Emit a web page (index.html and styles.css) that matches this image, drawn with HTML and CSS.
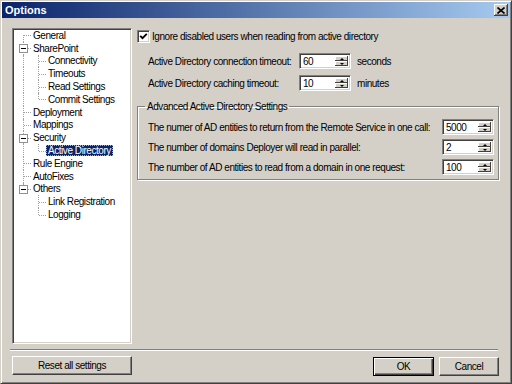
FILE: index.html
```html
<!DOCTYPE html>
<html lang="en">
<head>
    <meta charset="UTF-8">
    <title>Options</title>
    <link rel="stylesheet" href="styles.css">
</head>
<body>
    <div class="window">
        <div class="titlebar">
            <span class="title">Options</span>
            <span class="close">
                <svg width="8" height="7" viewBox="0 0 8 7"><path d="M0.5 0.5 L7.5 6.5 M7.5 0.5 L0.5 6.5" stroke="#000" stroke-width="1.6"/></svg>
            </span>
        </div>
        <div class="main">
            <div class="tree">
                <div class="row"><span class="g f"></span><span class="lbl">General</span></div>
                <div class="row"><span class="g t"><span class="box"></span></span><span class="lbl">SharePoint</span></div>
                <div class="row"><span class="g v"></span><span class="g t"></span><span class="lbl">Connectivity</span></div>
                <div class="row"><span class="g v"></span><span class="g t"></span><span class="lbl">Timeouts</span></div>
                <div class="row"><span class="g v"></span><span class="g t"></span><span class="lbl">Read Settings</span></div>
                <div class="row"><span class="g v"></span><span class="g l"></span><span class="lbl">Commit Settings</span></div>
                <div class="row"><span class="g t"></span><span class="lbl">Deployment</span></div>
                <div class="row"><span class="g t"></span><span class="lbl">Mappings</span></div>
                <div class="row"><span class="g t"><span class="box"></span></span><span class="lbl">Security</span></div>
                <div class="row"><span class="g v"></span><span class="g l"></span><span class="lbl selected">Active Directory</span></div>
                <div class="row"><span class="g t"></span><span class="lbl">Rule Engine</span></div>
                <div class="row"><span class="g t"></span><span class="lbl">AutoFixes</span></div>
                <div class="row"><span class="g l"><span class="box"></span></span><span class="lbl">Others</span></div>
                <div class="row"><span class="g"></span><span class="g t"></span><span class="lbl">Link Registration</span></div>
                <div class="row"><span class="g"></span><span class="g l"></span><span class="lbl">Logging</span></div>
            </div>
            <div class="panel">
                <div class="check-row">
                    <span class="check">
                        <svg width="9" height="9" viewBox="0 0 9 9"><path d="M1.2 3.8 L3.5 6.2 L7.8 1.8" fill="none" stroke="#000" stroke-width="1.8"/></svg>
                    </span>
                    <span>Ignore disabled users when reading from active directory</span>
                </div>
                <div class="fields">
                    <div class="field">
                        <span class="label">Active Directory connection timeout:</span>
                        <div class="spinbox"><span class="val">60</span><span class="spin"><span class="up"></span><span class="dn"></span></span></div>
                        <span class="unit">seconds</span>
                    </div>
                    <div class="field">
                        <span class="label">Active Directory caching timeout:</span>
                        <div class="spinbox"><span class="val">10</span><span class="spin"><span class="up"></span><span class="dn"></span></span></div>
                        <span class="unit">minutes</span>
                    </div>
                </div>
                <fieldset class="group">
                    <legend>Advanced Active Directory Settings</legend>
                    <div class="field wide">
                        <span class="label">The numer of AD entities to return from the Remote Service in one call:</span>
                        <div class="spinbox"><span class="val">5000</span><span class="spin"><span class="up"></span><span class="dn"></span></span></div>
                    </div>
                    <div class="field wide">
                        <span class="label">The number of domains Deployer will read in parallel:</span>
                        <div class="spinbox"><span class="val">2</span><span class="spin"><span class="up"></span><span class="dn"></span></span></div>
                    </div>
                    <div class="field wide">
                        <span class="label">The number of AD entities to read from a domain in one request:</span>
                        <div class="spinbox"><span class="val">100</span><span class="spin"><span class="up"></span><span class="dn"></span></span></div>
                    </div>
                </fieldset>
            </div>
        </div>
        <div class="sep"></div>
        <div class="footer">
            <button class="btn reset">Reset all settings</button>
            <span class="spacer"></span>
            <button class="btn ok">OK</button>
            <button class="btn cancel">Cancel</button>
        </div>
    </div>
</body>
</html>
```

FILE: styles.css
```css
body {
    margin: 0;
    font-family: "Liberation Sans", Arial, sans-serif;
    font-size: 10px;
    letter-spacing: -0.45px;
    color: #000;
}

.window {
    width: 512px;
    height: 384px;
    box-sizing: border-box;
    background: #d4d0c8;
    border: 1px solid;
    border-color: #d4d0c8 #404040 #404040 #d4d0c8;
    padding: 1px;
    box-shadow: inset 1px 1px #fff, inset -1px -1px #808080;
    display: flex;
    flex-direction: column;
}

.titlebar {
    height: 16px;
    flex: none;
    background: linear-gradient(to right, #0a246a, #a6caf0);
    display: flex;
    align-items: center;
    justify-content: space-between;
    padding: 0 2px 0 3px;
}

.title {
    color: #fff;
    font-weight: bold;
    font-size: 11px;
    letter-spacing: 0;
}

.close {
    width: 14px;
    height: 12px;
    background: #d4d0c8;
    box-shadow: inset -1px -1px #404040, inset 1px 1px #fff, inset -2px -2px #808080;
    display: flex;
    align-items: center;
    justify-content: center;
}

.main {
    display: flex;
    gap: 5px;
    height: 316px;
    margin: 10px 11px 0 10px;
}

/* tree */
.tree {
    width: 120px;
    flex: none;
    box-sizing: border-box;
    background: #fff;
    border: 1px solid;
    border-color: #808080 #fff #fff #808080;
    box-shadow: inset 1px 1px #404040, inset -1px -1px #d4d0c8;
    padding: 0 0 0 3px;
}

.row {
    height: 12.8px;
    display: flex;
    align-items: center;
}

.g {
    width: 15px;
    height: 100%;
    flex: none;
    position: relative;
}

.g::before, .g::after {
    content: "";
    position: absolute;
}

.g.v::before, .g.t::before {
    left: 7px;
    top: 0;
    bottom: 0;
    border-left: 1px dotted #a0a0a0;
}

.g.f::before {
    left: 7px;
    top: 50%;
    bottom: 0;
    border-left: 1px dotted #a0a0a0;
}

.g.l::before {
    left: 7px;
    top: 0;
    height: 50%;
    border-left: 1px dotted #a0a0a0;
}

.g.t::after, .g.f::after, .g.l::after {
    left: 8px;
    right: 0;
    top: 50%;
    border-top: 1px dotted #a0a0a0;
}

.box {
    position: absolute;
    left: 3px;
    top: 50%;
    margin-top: -4px;
    width: 9px;
    height: 9px;
    box-sizing: border-box;
    border: 1px solid #909090;
    background: #fff;
    z-index: 1;
    display: flex;
    align-items: center;
    justify-content: center;
}

.box::after {
    content: "";
    width: 5px;
    height: 1px;
    background: #000;
}

.lbl {
    padding: 0 2px;
    line-height: 11px;
    white-space: nowrap;
}

.lbl.selected {
    background: #0a246a;
    color: #fff;
    outline: 1px dotted #c8b070;
    outline-offset: -1px;
}

/* right side */
.panel {
    flex: 1;
    display: flex;
    flex-direction: column;
}

.check-row {
    display: flex;
    align-items: center;
    gap: 2px;
    height: 13px;
    margin-top: 2px;
}

.check {
    width: 13px;
    height: 13px;
    box-sizing: border-box;
    background: #fff;
    border: 1px solid;
    border-color: #808080 #fff #fff #808080;
    box-shadow: inset 1px 1px #404040, inset -1px -1px #d4d0c8;
    display: flex;
    align-items: center;
    justify-content: center;
}

.fields {
    display: flex;
    flex-direction: column;
    gap: 6px;
    margin-top: 10px;
}

.field {
    display: flex;
    align-items: center;
    height: 16px;
    padding-left: 11px;
}

.field .label {
    width: 151px;
    flex: none;
    white-space: nowrap;
}

.field.wide {
    padding-left: 10px;
}

.field.wide .label {
    width: auto;
    flex: 1;
}

.field.wide + .field.wide {
    margin-top: 4px;
}

.unit {
    margin-left: 6px;
}

.spinbox {
    width: 52px;
    height: 16px;
    flex: none;
    box-sizing: border-box;
    display: flex;
    background: #fff;
    border: 1px solid;
    border-color: #808080 #fff #fff #808080;
    box-shadow: inset 1px 1px #404040, inset -1px -1px #d4d0c8;
    padding: 2px 2px 2px 2px;
}

.spinbox .val {
    flex: 1;
    padding-left: 1px;
    line-height: 12px;
}

.spin {
    width: 13px;
    display: flex;
    flex-direction: column;
}

.spin span {
    flex: 1;
    background: #d4d0c8;
    box-shadow: inset -1px -1px #404040, inset 1px 1px #fff;
    display: flex;
    align-items: center;
    justify-content: center;
}

.spin .up::after {
    content: "";
    border-left: 2px solid transparent;
    border-right: 2px solid transparent;
    border-bottom: 2px solid #000;
}

.spin .dn::after {
    content: "";
    border-left: 2px solid transparent;
    border-right: 2px solid transparent;
    border-top: 2px solid #000;
}

.group {
    margin: 10px 0 0 0;
    padding: 7px 4px 4px 0;
    min-width: 0;
    border: 1px solid #808080;
    box-shadow: inset 1px 1px #fff, 1px 1px #fff;
}

.group legend {
    margin-left: 7px;
    padding: 0 2px;
}

/* footer */
.sep {
    height: 0;
    border-top: 1px solid #808080;
    border-bottom: 1px solid #fff;
    margin: 5px 12px 0 8px;
}

.footer {
    display: flex;
    gap: 5px;
    margin: 5px 11px 0 10px;
}

.spacer {
    flex: 1;
}

.btn {
    font: inherit;
    letter-spacing: inherit;
    color: #000;
    height: 19px;
    padding: 0;
    background: #d4d0c8;
    border: 1px solid;
    border-color: #fff #404040 #404040 #fff;
    box-shadow: inset -1px -1px #808080;
}

.btn.reset {
    width: 120px;
}

.btn.ok {
    width: 61px;
    margin-top: 1px;
    border-color: #000;
    box-shadow: inset 1px 1px #fff, inset -1px -1px #404040, inset -2px -2px #808080;
}

.btn.cancel {
    width: 60px;
    margin-top: 1px;
}
```
